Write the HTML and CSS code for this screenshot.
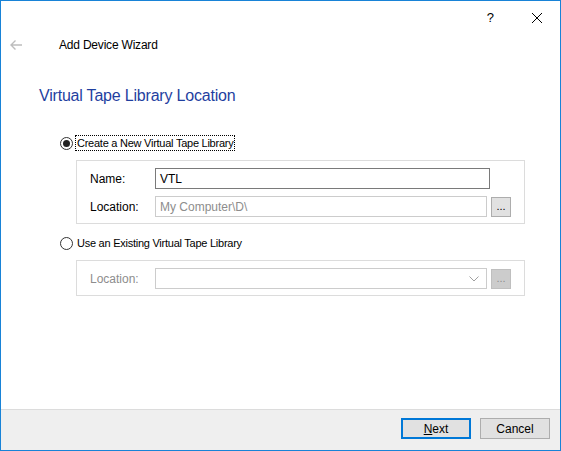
FILE: index.html
```html
<!DOCTYPE html>
<html>
<head>
    <meta charset="utf-8">
    <title>Add Device Wizard</title>
    <link rel="stylesheet" href="styles.css">
</head>
<body>
    <div class="win">
        <div class="titlebar">
            <span class="help">?</span>
            <svg class="close" width="12" height="12" viewBox="0 0 12 12"><path d="M1 1 L11 11 M11 1 L1 11" stroke="#000" stroke-width="1" fill="none"/></svg>
        </div>
        <div class="hd">
            <svg class="back" width="14" height="12" viewBox="0 0 14 12"><path d="M13 6 H2 M6.5 1.5 L2 6 L6.5 10.5" stroke="#bdbdbd" stroke-width="1.4" fill="none"/></svg>
            <span class="hd-title">Add Device Wizard</span>
        </div>
        <h1 class="page-title">Virtual Tape Library Location</h1>

        <div class="opt">
            <span class="radio on"></span><span class="opt-txt focus">Create a New Virtual Tape Library</span>
        </div>
        <div class="grp">
            <div class="li">
                <span class="lbl">Name:</span>
                <span class="txt txt-name">VTL</span>
            </div>
            <div class="li">
                <span class="lbl">Location:</span>
                <span class="txt txt-loc">My Computer\D\</span>
                <span class="btn-dots">...</span>
            </div>
        </div>

        <div class="opt opt2">
            <span class="radio"></span><span class="opt-txt">Use an Existing Virtual Tape Library</span>
        </div>
        <div class="grp">
            <div class="li">
                <span class="lbl off">Location:</span>
                <span class="txt txt-loc combo">
                    <svg class="chev" width="10" height="6" viewBox="0 0 10 6"><path d="M0.5 0.5 L5 5 L9.5 0.5" stroke="#a0a0a0" stroke-width="1" fill="none"/></svg>
                </span>
                <span class="btn-dots off">...</span>
            </div>
        </div>

        <div class="fill"></div>
        <div class="foot">
            <span class="btn btn-primary"><u>N</u>ext</span>
            <span class="btn">Cancel</span>
        </div>
    </div>
</body>
</html>
```

FILE: styles.css
```css
* { box-sizing: border-box; }
body { margin: 0; font-family: "Liberation Sans", Arial, sans-serif; font-size: 12px; color: #000; background: #fff; }
.win { width: 561px; height: 451px; border: 1px solid #1883d7; display: flex; flex-direction: column; background: #fff; }

.titlebar { height: 32px; display: flex; justify-content: flex-end; align-items: center; padding-right: 17px; }
.titlebar .help { font-size: 13px; margin-right: 37px; }
.titlebar .close { margin-top: 1px; }

.hd { height: 24px; display: flex; align-items: center; padding-left: 8px; }
.hd .back { margin-right: 36px; }
.hd-title { font-size: 12px; letter-spacing: -0.2px; }

.page-title { margin: 27px 0 0 38px; font-size: 16px; line-height: 24px; font-weight: normal; color: #1f3f9f; letter-spacing: -0.2px; }

.opt { height: 16px; margin: 27px 0 0 59px; display: flex; align-items: center; }
.opt2 { margin-top: 11px; }
.radio { width: 13px; height: 13px; border: 1px solid #333; border-radius: 50%; display: inline-flex; align-items: center; justify-content: center; margin-right: 2px; }
.radio.on::after { content: ""; width: 7px; height: 7px; border-radius: 50%; background: #222; }
.opt-txt { font-size: 11px; letter-spacing: -0.25px; line-height: 14px; padding: 0 1px; border: 1px dotted transparent; }
.opt-txt.focus { border-color: #000; }

.grp { margin: 9px 0 0 75px; width: 449px; border: 1px solid #dcdcdc; padding: 7px 0 6px 13px; display: flex; flex-direction: column; gap: 7px; }
.li { display: flex; align-items: center; height: 21px; }
.lbl { width: 65px; }
.lbl.off { color: #8d8d8d; }
.txt { height: 21px; border: 1px solid #cccccc; padding-left: 4px; display: flex; align-items: center; color: #8d8d8d; }
.txt-name { width: 335px; border-color: #7a7a7a; color: #000; }
.txt-loc { width: 332px; }
.combo { justify-content: flex-end; padding-right: 7px; }
.btn-dots { width: 20px; height: 20px; margin-left: 4px; background: #e1e1e1; border: 1px solid #adadad; display: flex; align-items: flex-end; justify-content: center; font-size: 11px; line-height: 1; padding-bottom: 4px; }
.btn-dots.off { background: #cccccc; border-color: #bfbfbf; color: #8d8d8d; }

.fill { flex: 1; }
.foot { height: 41px; border-top: 1px solid #dcdcdc; background: #efefef; display: flex; justify-content: flex-end; gap: 9px; padding: 8px 10px 0 0; }
.btn { width: 70px; height: 21px; background: #e1e1e1; border: 1px solid #adadad; display: flex; align-items: center; justify-content: center; }
.btn-primary { border: 2px solid #0078d7; }
```
